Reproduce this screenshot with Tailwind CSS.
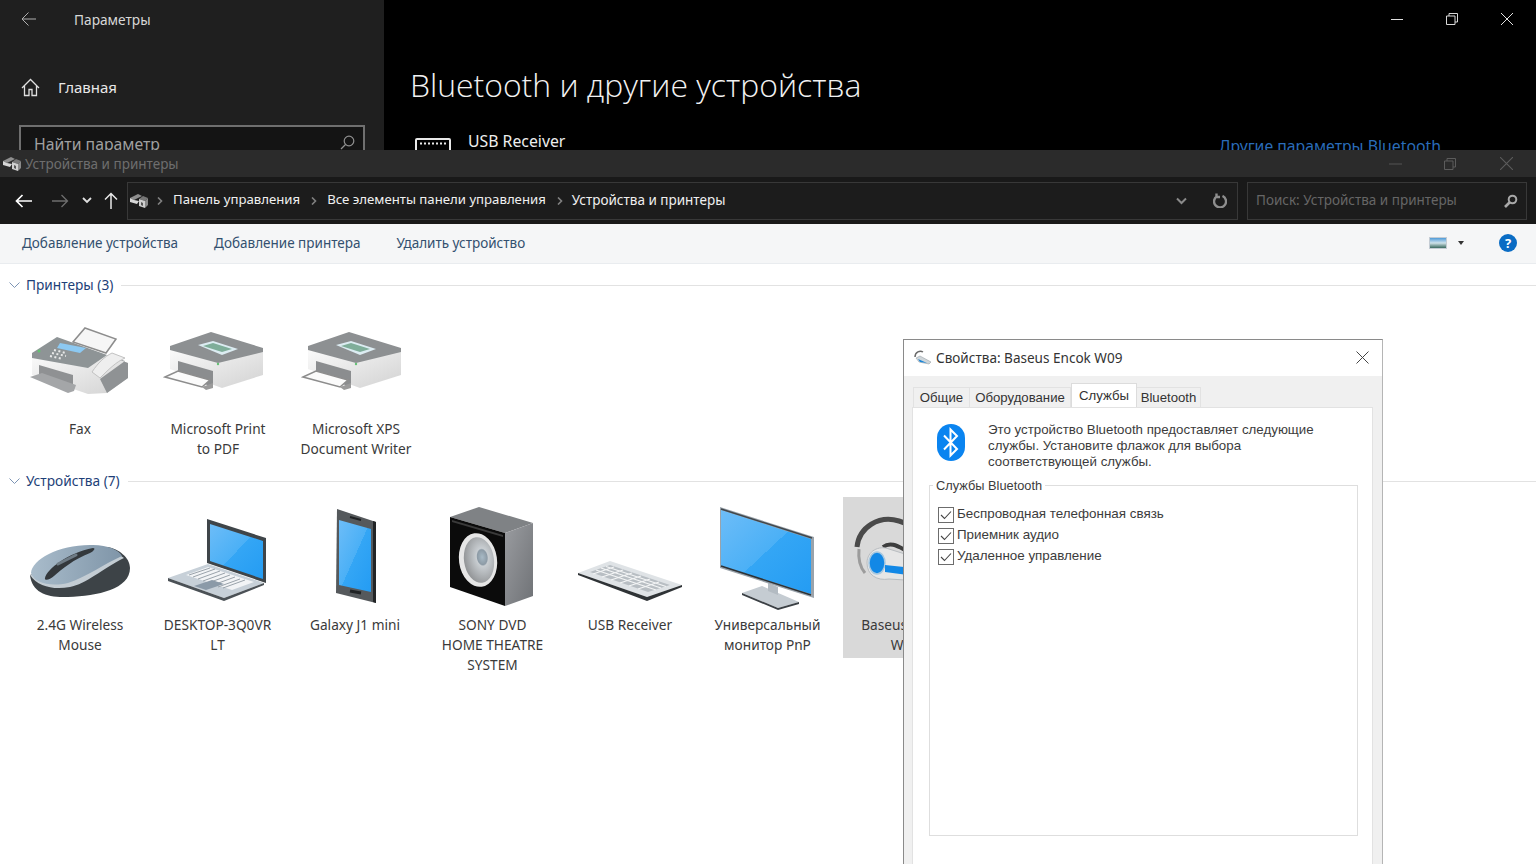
<!DOCTYPE html>
<html lang="ru">
<head>
    <meta charset="UTF-8">
    <title>Устройства и принтеры</title>
    <script src="https://cdn.jsdelivr.net/npm/@tailwindcss/browser@4"></script>
</head>
<body class="bg-white font-['Noto_Sans',sans-serif]">
<div class="relative w-[1536px] h-[864px] overflow-hidden">

    <!-- shared gradients and the printer drawing -->
    <svg class="absolute w-0 h-0"><defs>
        <linearGradient id="bodyGrad" x1="0" y1="0" x2="1" y2="1"><stop offset="0" stop-color="#fbfbfb"/><stop offset="1" stop-color="#d2d2d2"/></linearGradient>
        <linearGradient id="blueGrad" x1="0" y1="0" x2="1" y2="1"><stop offset="0" stop-color="#6dbdf8"/><stop offset=".5" stop-color="#4bb0f6"/><stop offset=".5" stop-color="#34a6f5"/><stop offset="1" stop-color="#249cf3"/></linearGradient>
        <linearGradient id="mouseGrad" x1="0" y1="0" x2="1" y2="0"><stop offset="0" stop-color="#a9bccb"/><stop offset="1" stop-color="#7f95a8"/></linearGradient>
        <linearGradient id="sideGrad" x1="0" y1="0" x2="1" y2="1"><stop offset="0" stop-color="#9a9ca0"/><stop offset="1" stop-color="#6f7276"/></linearGradient>
        <radialGradient id="coneGrad" cx=".62" cy=".45" r=".65"><stop offset="0" stop-color="#a8bac6"/><stop offset=".25" stop-color="#8d9ba6"/><stop offset=".3" stop-color="#c9ced2"/><stop offset="1" stop-color="#8e9092"/></radialGradient>
        <g id="printer">
            <path d="M14 47V68L66 87 107 74V49Z" fill="url(#bodyGrad)"/>
            <path d="M14 45 55 31 107 47V51L62 62 14 49Z" fill="#8d9092"/>
            <path d="M42 44 57 40 82 48 66 54Z" fill="#dcecf2"/>
            <path d="M47 45 57 42 76 48 66 51Z" fill="#7fae9a"/>
            <path d="M22 60 57 70V86L22 74Z" fill="#8b8d8f"/>
            <path d="M9 76 22 70 54 79 46 86Z" fill="#fbfbfb" stroke="#8d8d8d" stroke-width="1.500"/>
            <path d="M46 86 57 82V87L50 89Z" fill="#9a9a9a"/>
            <circle cx="62" cy="63" r="1.200" fill="#63c174"/>
        </g>
        <g id="explorerIcon">
            <path d="M0 5 8 1 12 3 4 7Z" fill="#8f8f8f"/>
            <path d="M0 5V9L7 11 9 8 4 7Z" fill="#d8d8d8"/>
            <path d="M9 6 13 3 18 5 15 8Z" fill="#777"/>
            <path d="M9 6 15 8V15L9 13Z" fill="#cfcfcf"/>
            <path d="M15 8 18 5V12L15 15Z" fill="#8a8a8a"/>
            <path d="M11 9 13 10V13L11 12Z" fill="#555"/>
        </g>
    </defs></svg>

    <!-- Settings window behind -->
    <div class="flex h-[150px] overflow-hidden bg-black text-white">
        <aside class="w-[384px] shrink-0 bg-[#1f1f1f]">
            <div class="flex items-center h-[38px]">
                <svg class="ml-[21px] w-[16px] h-[16px]" viewBox="0 0 16 16" fill="none" stroke="#b0b0b0" stroke-width="1"><path d="M15 8H1M7.500 1.500 1 8l6.500 6.500"/></svg>
                <span class="ml-[37px] mt-[2px] text-[13.700px] text-[#d8d8d8]">Параметры</span>
            </div>
            <div class="flex items-center mt-[30px] h-[38px]">
                <svg class="ml-[21px] w-[19px] h-[19px]" viewBox="0 0 19 19" fill="none" stroke="#e0e0e0" stroke-width="1.300"><path d="M1 10 9.500 1.500 18 10M3.500 8v9.500h4.500v-6h3v6h4.500V8"/></svg>
                <span class="ml-[18px] text-[15px] text-[#e8e8e8]">Главная</span>
            </div>
            <div class="mt-[19px] mx-[19px] h-[40px] border-2 border-[#6f6f6f] bg-[#141414] flex items-start justify-between px-[13px] pt-[6px]">
                <span class="text-[15.800px] text-[#a0a0a0]">Найти параметр</span>
                <svg class="mt-[2px] mr-[-5px] w-[15px] h-[15px]" viewBox="0 0 15 15" fill="none" stroke="#909090" stroke-width="1.200"><circle cx="9" cy="6" r="4.800"/><path d="M5.500 9.500 1 14"/></svg>
            </div>
        </aside>
        <main class="relative flex-1 pl-[26px]">
            <h1 class="pt-[59px] text-[31.900px] leading-[52px] font-light text-[#f2f2f2] font-['Open_Sans',sans-serif]">Bluetooth и другие устройства</h1>
            <div class="flex items-start mt-[-2px]">
                <svg class="ml-[5px] mt-[29px] w-[36px] h-[24px]" viewBox="0 0 36 24" fill="none" stroke="#e8e8e8" stroke-width="2"><rect x="1" y="1" width="34" height="20" rx="1"/><path d="M5 5.500h26" stroke-dasharray="2 2"/></svg>
                <span class="ml-[17px] mt-[20px] text-[15.800px] leading-[24px] text-[#eeeeee]">USB Receiver</span>
            </div>
            <span class="absolute left-[835px] top-[134px] text-[15.800px] leading-[24px] text-[#2a6cb8] whitespace-nowrap">Другие параметры Bluetooth</span>
            <div class="absolute right-0 top-0 flex items-center h-[38px]">
                <div class="w-[55px] flex justify-center"><svg class="w-[12px] h-[12px]" viewBox="0 0 12 12" stroke="#e0e0e0"><path d="M0 6.500h12"/></svg></div>
                <div class="w-[55px] flex justify-center"><svg class="w-[12px] h-[12px]" viewBox="0 0 12 12" fill="none" stroke="#d8d8d8"><path d="M.5 3h8.500v8.500H.5zM3 3V.5h8.500V9H9"/></svg></div>
                <div class="w-[57px] pr-[2px] flex justify-center"><svg class="w-[12px] h-[12px]" viewBox="0 0 12 12" stroke="#e0e0e0"><path d="M0 0l12 12M12 0 0 12"/></svg></div>
            </div>
        </main>
    </div>

    <!-- Explorer window: title bar -->
    <div class="flex items-center h-[27px] bg-[#2b2b2b] pl-[3px]">
        <svg class="w-[18px] h-[16px]" viewBox="0 0 18 16"><use href="#explorerIcon"/></svg>
        <span class="ml-[4px] mt-[1px] text-[13.500px] text-[#6e6e6e]">Устройства и принтеры</span>
        <div class="ml-auto flex items-center">
            <div class="w-[55px] pr-[3px] flex justify-center"><svg class="w-[13px] h-[12px]" viewBox="0 0 13 12" stroke="#555"><path d="M0 6h13"/></svg></div>
            <div class="w-[55px] pr-[3px] flex justify-center"><svg class="w-[12px] h-[12px]" viewBox="0 0 12 12" fill="none" stroke="#5c5c5c"><path d="M.5 3h8.500v8.500H.5zM3 3V.5h8.500V9H9"/></svg></div>
            <div class="w-[57px] pr-[2px] flex justify-center"><svg class="w-[13px] h-[13px]" viewBox="0 0 12 12" stroke="#5c5c5c"><path d="M0 0l12 12M12 0 0 12"/></svg></div>
        </div>
    </div>

    <!-- Explorer window: address bar -->
    <div class="flex items-center h-[47px] bg-[#191919] text-white">
        <div class="flex items-center w-[127px] shrink-0">
            <svg class="ml-[15px] w-[17px] h-[14px]" viewBox="0 0 17 14" fill="none" stroke="#ffffff" stroke-width="1.700"><path d="M17 7H1.500M7.500 1 1.500 7l6 6"/></svg>
            <svg class="ml-[20px] w-[17px] h-[14px]" viewBox="0 0 17 14" fill="none" stroke="#6e6e6e" stroke-width="1.300"><path d="M0 7h15.500M9.500 1l6 6-6 6"/></svg>
            <svg class="ml-[13px] w-[10px] h-[7px]" viewBox="0 0 10 7" fill="none" stroke="#e0e0e0" stroke-width="1.800"><path d="M1 1l4 4 4-4"/></svg>
            <svg class="ml-[12px] w-[14px] h-[17px]" viewBox="0 0 14 17" fill="none" stroke="#e8e8e8" stroke-width="1.500"><path d="M7 17V1.500M1 7.500l6-6 6 6"/></svg>
        </div>
        <div class="flex items-center w-[1111px] h-[38px] border border-[#383838] bg-[#1c1c1c]">
            <svg class="ml-[2px] w-[18px] h-[16px] shrink-0" viewBox="0 0 18 16"><use href="#explorerIcon"/></svg>
            <svg class="ml-[9px] w-[6px] h-[8px]" viewBox="0 0 6 8" fill="none" stroke="#808080" stroke-width="1.600"><path d="M1 .5 4.500 4 1 7.500"/></svg>
            <span class="ml-[10px] pb-[1px] text-[13.200px] text-[#f0f0f0]">Панель управления</span>
            <svg class="ml-[11px] w-[6px] h-[8px]" viewBox="0 0 6 8" fill="none" stroke="#808080" stroke-width="1.600"><path d="M1 .5 4.500 4 1 7.500"/></svg>
            <span class="ml-[10px] pb-[1px] text-[13.200px] text-[#f0f0f0]">Все элементы панели управления</span>
            <svg class="ml-[11px] w-[6px] h-[8px]" viewBox="0 0 6 8" fill="none" stroke="#808080" stroke-width="1.600"><path d="M1 .5 4.500 4 1 7.500"/></svg>
            <span class="ml-[9px] pb-[1px] text-[13.500px] text-[#f0f0f0]">Устройства и принтеры</span>
            <svg class="ml-auto w-[11px] h-[8px]" viewBox="0 0 11 8" fill="none" stroke="#8a8a8a" stroke-width="2"><path d="M1 1.500l4.500 4.500L10 1.500"/></svg>
            <svg class="ml-[26px] mr-[10px] w-[14px] h-[15px]" viewBox="0 0 14 15" fill="none" stroke="#8e8e8e" stroke-width="2.400"><path d="M4 3.200a6 6 0 1 0 5.500-.3M3.500.5v3.500H7"/></svg>
        </div>
        <div class="ml-[9px] flex items-center justify-between w-[280px] h-[38px] border border-[#383838] bg-[#1c1c1c] pl-[8px] pr-[8px]">
            <span class="text-[13.500px] text-[#666666]">Поиск: Устройства и принтеры</span>
            <svg class="w-[14px] h-[14px]" viewBox="0 0 14 14" fill="none" stroke="#a8a8a8"><circle cx="8.500" cy="5.500" r="3.800" stroke-width="2"/><path d="M5.500 8.500 1 13" stroke-width="2.600"/></svg>
        </div>
    </div>

    <!-- Explorer window: command bar -->
    <div class="flex items-center h-[40px] bg-[#f5f6f7] border-b border-[#e9ecef] pl-[22px] text-[13.500px] text-[#33506f]">
        <span>Добавление устройства</span>
        <span class="ml-[36px]">Добавление принтера</span>
        <span class="ml-[36px]">Удалить устройство</span>
        <div class="ml-auto flex items-center mr-[19px] mb-[1px]">
            <div class="w-[18px] h-[12px] border border-[#c4ccd4] bg-gradient-to-b from-[#4d9bd8] via-[#cfe3ea] to-[#3a6b60]"></div>
            <svg class="ml-[11px] w-[6px] h-[4px]" viewBox="0 0 6 4"><path d="M0 0h6L3 4z" fill="#333"/></svg>
            <div class="ml-[35px] w-[18px] h-[18px] rounded-full bg-[#0a6cc4] flex items-center justify-center text-[13px] font-bold text-white leading-none">?</div>
        </div>
    </div>

    <!-- Printers -->
    <section class="pt-[11px]">
        <header class="flex items-center h-[20px] pl-[9px]">
            <svg class="w-[11px] h-[7px]" viewBox="0 0 11 7" fill="none" stroke="#7c94b4"><path d="M.5.500l5 5 5-5"/></svg>
            <span class="ml-[6px] text-[13.700px] text-[#1e3f78]">Принтеры (3)</span>
            <div class="ml-[8px] flex-1 h-px bg-[#e2e2e2]"></div>
        </header>
        <div class="flex gap-[14px] pl-[18px] mt-[6px] h-[170px]">
            <figure class="w-[124px] px-[7px] text-center">
                <svg class="ml-[-7px] w-[124px] h-[118px] max-w-none" viewBox="0 0 124 118">
                    <path d="M67 27 98 38 88 52 55 41Z" fill="#f6f6f6" stroke="#8d8d8d" stroke-width="1.500"/>
                    <path d="M14 52V74L70 93 89 92 110 77V62L89 54Z" fill="url(#bodyGrad)"/>
                    <path d="M14 52 39 36 89 54 70 67 14 57Z" fill="#8e9496"/>
                    <path d="M42 42 68 47 62 52 39 47Z" fill="#8cc9f2"/>
                    <path d="M36 49l12 3M34 52l14 3M32 55l13 3" stroke="#e9e9e9" stroke-width="2" stroke-dasharray="2 2.500"/>
                    <circle cx="21" cy="50" r="1.500" fill="#62c270"/>
                    <path d="M21 64 55 74V88L21 76Z" fill="#8f9193"/>
                    <path d="M12 76 24 72 58 84 56 90 50 92Z" fill="#a4a6a8"/>
                    <path d="M89 54 110 62V77L89 92 82 78 107 60Z" fill="#8f9294"/>
                    <path d="M74 71C80 62 86 56 94 52L107 57C98 61 90 69 82 77Z" fill="#eeeeee" stroke="#c2c2c2"/>
                </svg>
                <figcaption class="text-[13.700px] leading-[20px] text-[#3a3a3a]">Fax</figcaption>
            </figure>
            <figure class="w-[124px] px-[7px] text-center">
                <svg class="ml-[-7px] w-[124px] h-[118px] max-w-none" viewBox="0 0 124 118"><use href="#printer"/></svg>
                <figcaption class="text-[13.700px] leading-[20px] text-[#3a3a3a]">Microsoft Print to PDF</figcaption>
            </figure>
            <figure class="w-[124px] px-[4px] text-center">
                <svg class="ml-[-4px] w-[124px] h-[118px] max-w-none" viewBox="0 0 124 118"><use href="#printer"/></svg>
                <figcaption class="text-[13.700px] leading-[20px] text-[#3a3a3a]">Microsoft XPS Document Writer</figcaption>
            </figure>
        </div>
    </section>

    <!-- Devices -->
    <section>
        <header class="flex items-center h-[20px] pl-[9px]">
            <svg class="w-[11px] h-[7px]" viewBox="0 0 11 7" fill="none" stroke="#7c94b4"><path d="M.5.500l5 5 5-5"/></svg>
            <span class="ml-[6px] text-[13.700px] text-[#1e3f78]">Устройства (7)</span>
            <div class="ml-[8px] flex-1 h-px bg-[#e2e2e2]"></div>
        </header>
        <div class="flex gap-[13.500px] pl-[18px] mt-[6px]">
            <figure class="w-[124px] px-[7px] text-center">
                <svg class="ml-[-7px] w-[124px] h-[118px] max-w-none" viewBox="0 0 124 118">
                    <path d="M12 78C14 96 30 101 50 100 80 99 112 92 112 71 112 60 100 52 90 50Z" fill="#3d4347"/>
                    <path d="M12 78C20 90 36 93 52 90 68 87 84 72 106 61L96 54Z" fill="#c3ccd3"/>
                    <path d="M13 76C14 62 42 47 75 48 90 48 101 53 104 59 88 66 68 80 50 86 32 90 16 86 13 76Z" fill="url(#mouseGrad)"/>
                    <path d="M27 81C29 72 50 56 75 51 78 51 76 54 72 56 56 62 44 72 36 79 32 83 26 84 27 81Z" fill="#33383c"/>
                    <path d="M40 67 58 58" stroke="#6e7b85" stroke-width="3" stroke-linecap="round"/>
                </svg>
                <figcaption class="text-[13.700px] leading-[20px] text-[#3a3a3a]">2.4G Wireless Mouse</figcaption>
            </figure>
            <figure class="w-[124px] px-[7px] text-center">
                <svg class="ml-[-7px] w-[124px] h-[118px] max-w-none" viewBox="0 0 124 118">
                    <path d="M51 22 110 41V86L51 66Z" fill="#3f4549"/>
                    <path d="M54 27 107 44V82L54 64Z" fill="url(#blueGrad)"/>
                    <path d="M12 81 52 67 108 86 68 101Z" fill="#c7d0d8"/>
                    <path d="M12 81V84L68 104 108 88V86L68 101Z" fill="#4b5156"/>
                    <path d="M30 78 52 70 98 85 76 93Z" fill="#f2f4f6"/>
                    <path d="M33 78 54 71M37 80 59 72M42 82 64 74M47 84 69 76M52 86 74 78M57 88 79 80M62 90 84 82M67 91 89 83" stroke="#9aa3ab" stroke-width="1"/>
                    <path d="M38 89 56 83 68 87 50 93Z" fill="#8b9aa8"/>
                </svg>
                <figcaption class="text-[13.700px] leading-[20px] text-[#3a3a3a]">DESKTOP-3Q0VR LT</figcaption>
            </figure>
            <figure class="w-[124px] px-[7px] text-center">
                <svg class="ml-[-7px] w-[124px] h-[118px] max-w-none" viewBox="0 0 124 118">
                    <path d="M44 12 83 25V106L43 96Z" fill="#55595c"/>
                    <path d="M80 24 83 25V106L80 105Z" fill="#222527"/>
                    <path d="M46 23 78 32V95L46 88Z" fill="url(#blueGrad)"/>
                    <path d="M57 20 68 23" stroke="#1f2224" stroke-width="2"/>
                    <path d="M57 94 68 96" stroke="#1f2224" stroke-width="3"/>
                </svg>
                <figcaption class="text-[13.700px] leading-[20px] text-[#3a3a3a]">Galaxy J1 mini</figcaption>
            </figure>
            <figure class="w-[124px] px-[7px] text-center">
                <svg class="ml-[-7px] w-[124px] h-[118px] max-w-none" viewBox="0 0 124 118">
                    <path d="M19 20 48 10 102 26 74 36Z" fill="#7f8285"/>
                    <path d="M74 36 102 26V99L74 109Z" fill="url(#sideGrad)"/>
                    <path d="M19 20 74 36V109L19 90Z" fill="#0b0b0b"/>
                    <path d="M21 23 72 38V40L21 25Z" fill="#3a3a3a"/>
                    <ellipse cx="47" cy="63" rx="19" ry="27" fill="#e6e6e6" transform="rotate(-8 47 63)"/>
                    <ellipse cx="48" cy="63" rx="15" ry="23" fill="url(#coneGrad)" transform="rotate(-8 48 63)"/>
                </svg>
                <figcaption class="text-[13.700px] leading-[20px] text-[#3a3a3a]">SONY DVD HOME THEATRE SYSTEM</figcaption>
            </figure>
            <figure class="w-[124px] px-[7px] text-center">
                <svg class="ml-[-7px] w-[124px] h-[118px] max-w-none" viewBox="0 0 124 118">
                    <path d="M10 76 42 64 114 88 79 100Z" fill="#dfe3e6"/>
                    <path d="M10 76V78L79 104 114 90V88L79 100Z" fill="#2f3336"/>
                    <path d="M22 75 42 68 102 88 80 95Z" fill="#b8bec3"/>
                    <path d="M28 73 88 93M33 71 93 91M38 69.500 98 89.500M25 77 46 70M34 80 55 73M43 83 64 76M52 86 73 79M61 89 82 82M70 92 91 85" stroke="#f3f4f5" stroke-width="1.300"/>
                </svg>
                <figcaption class="text-[13.700px] leading-[20px] text-[#3a3a3a]">USB Receiver</figcaption>
            </figure>
            <figure class="w-[124px] px-[7px] text-center">
                <svg class="ml-[-7px] w-[124px] h-[118px] max-w-none" viewBox="0 0 124 118">
                    <path d="M36 96 56 89 93 105 72 111Z" fill="#c5ccd2"/>
                    <path d="M36 96 36 98 72 113 93 107V105L72 111Z" fill="#3b4045"/>
                    <path d="M62 86 72 90 72 98 62 94Z" fill="#b3bbc2"/>
                    <path d="M14 10 108 40V101L14 71Z" fill="#9aa3ab"/>
                    <path d="M15 13 105 42V97L15 69Z" fill="url(#blueGrad)"/>
                    <path d="M15 12 106 41" stroke="#40464b" stroke-width="1.500"/>
                    <path d="M15 69 105 98" stroke="#2d3236" stroke-width="1.500"/>
                </svg>
                <figcaption class="text-[13.700px] leading-[20px] text-[#3a3a3a]">Универсальный монитор PnP</figcaption>
            </figure>
            <figure class="w-[124px] h-[161px] px-[7px] text-center bg-[#d9d9d9]">
                <svg class="ml-[-7px] w-[124px] h-[118px] max-w-none" viewBox="0 0 124 118">
                    <path d="M14 50C16 30 36 18 56 24 66 27 72 31 76 36" fill="none" stroke="#4a4a4a" stroke-width="5"/>
                    <path d="M16 52C15 62 17 70 22 76" fill="none" stroke="#9c9c9c" stroke-width="3"/>
                    <path d="M40 50C48 44 56 50 64 54 70 56 74 56 78 56" fill="none" stroke="#3e3e3e" stroke-width="4"/>
                    <path d="M24 66C24 54 36 48 46 52L78 62V84L46 82C34 84 24 78 24 66Z" fill="#e6e6e6" stroke="#b9bdc1"/>
                    <ellipse cx="34" cy="66" rx="8" ry="11" fill="#1288e6" stroke="#a8c8e0" stroke-width="1.500"/>
                    <path d="M42 68 80 72V80L42 75Z" fill="#1288e6"/>
                </svg>
                <figcaption class="text-[13.700px] leading-[20px] text-[#3a3a3a]">Baseus Encok W09</figcaption>
            </figure>
        </div>
    </section>

    <!-- Properties dialog, a window of its own over the explorer -->
    <div class="absolute left-[903px] top-[339px] w-[480px] h-[540px] flex flex-col border border-[#8a8a8a] border-r-[#b5b5b5] bg-[#f0f0f0] font-['Liberation_Sans',sans-serif]">
        <div class="flex items-center h-[36px] pb-[2px] bg-white shrink-0">
            <svg class="ml-[9px] w-[20px] h-[16px]" viewBox="0 0 20 16" fill="none"><path d="M2 8C2 3 7 1 10 3" stroke="#6a6a6a" stroke-width="1.500"/><path d="M3 9 7 7 18 13 16 15 6 13Z" fill="#cfd6da" stroke="#9aa3a8" stroke-width=".6"/><path d="M5 10 14 14 7 13Z" fill="#1a86d8"/></svg>
            <span class="ml-[3px] mt-[3px] text-[13.550px] text-[#333333] font-['Noto_Sans',sans-serif]">Свойства: Baseus Encok W09</span>
            <svg class="ml-auto mr-[13px] w-[13px] h-[13px]" viewBox="0 0 13 13" stroke="#444"><path d="M.5.5l12 12M12.500.5l-12 12"/></svg>
        </div>
        <div class="flex items-end h-[31px] pl-[9px] text-[13.200px] text-[#333333] shrink-0">
            <span class="flex items-center justify-center w-[57px] h-[20px] pt-[1px] bg-[#f0f0f0] border border-b-0 border-[#e2e2e2]">Общие</span>
            <span class="flex items-center justify-center w-[101px] h-[20px] pt-[1px] bg-[#f0f0f0] border border-b-0 border-l-0 border-[#e2e2e2]">Оборудование</span>
            <span class="flex items-center justify-center w-[66px] h-[24px] bg-white border border-b-0 border-[#dcdcdc]">Службы</span>
            <span class="flex items-center justify-center w-[64px] h-[20px] pt-[1px] bg-[#f0f0f0] border border-b-0 border-l-0 border-[#e2e2e2]">Bluetooth</span>
        </div>
        <div class="ml-[8px] mr-[9px] flex-1 bg-white border-t border-x border-[#e2e2e2] text-[13px] text-[#3c3c3c]">
            <div class="flex pt-[14px] pl-[24px]">
                <svg class="mt-[2px] w-[28px] h-[37px] shrink-0" viewBox="0 0 28 37">
                    <rect width="28" height="37" rx="14" fill="#0a84f0"/>
                    <path d="M7 11.500 20 25 13.500 31.500V5.500L20 12 7 25.500" fill="none" stroke="#ffffff" stroke-width="2"/>
                </svg>
                <p class="ml-[23px] w-[350px] text-[13.300px] leading-[16px]">Это устройство Bluetooth предоставляет следующие службы. Установите флажок для выбора соответствующей службы.</p>
            </div>
            <div class="relative mt-[15px] ml-[16px] w-[429px] h-[351px] border border-[#dedede] pt-[18px] pl-[8px] text-[13.400px]">
                <span class="absolute left-[3px] top-[-8px] px-[3px] bg-white text-[12.800px] leading-[16px]">Службы Bluetooth</span>
                <label class="flex items-center h-[21px]">
                    <svg class="w-[16px] h-[16px]" viewBox="0 0 16 16" fill="none"><rect x=".5" y=".5" width="15" height="15" stroke="#6c6c6c"/><path d="M3 8l3.500 3.500L13 4.500" stroke="#444" stroke-width="1.100"/></svg>
                    <span class="ml-[3px]">Беспроводная телефонная связь</span>
                </label>
                <label class="flex items-center h-[21px]">
                    <svg class="w-[16px] h-[16px]" viewBox="0 0 16 16" fill="none"><rect x=".5" y=".5" width="15" height="15" stroke="#6c6c6c"/><path d="M3 8l3.500 3.500L13 4.500" stroke="#444" stroke-width="1.100"/></svg>
                    <span class="ml-[3px]">Приемник аудио</span>
                </label>
                <label class="flex items-center h-[21px]">
                    <svg class="w-[16px] h-[16px]" viewBox="0 0 16 16" fill="none"><rect x=".5" y=".5" width="15" height="15" stroke="#6c6c6c"/><path d="M3 8l3.500 3.500L13 4.500" stroke="#444" stroke-width="1.100"/></svg>
                    <span class="ml-[3px]">Удаленное управление</span>
                </label>
            </div>
        </div>
    </div>
</div>
</body>
</html>
